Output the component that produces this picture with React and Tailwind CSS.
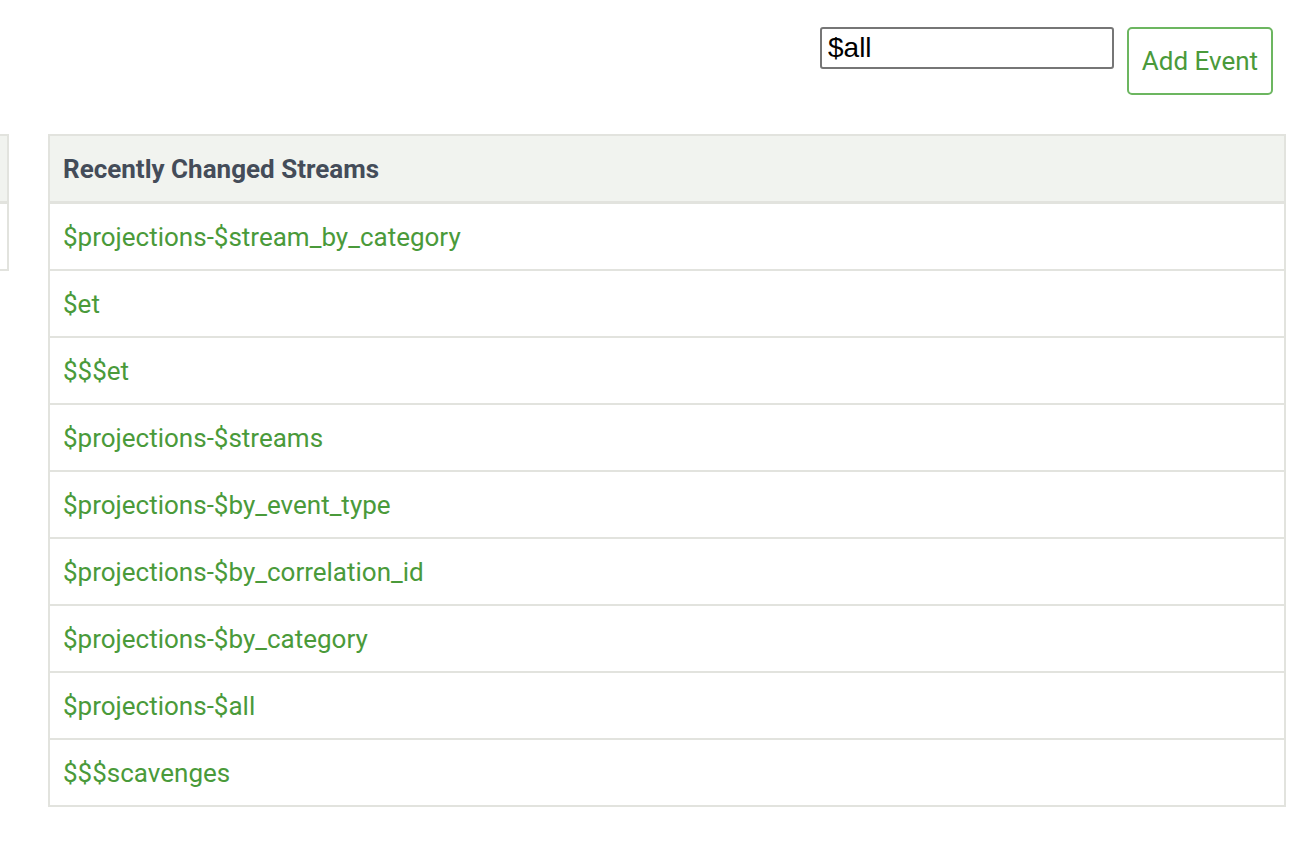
const streams = [
  "$projections-$stream_by_category",
  "$et",
  "$$$et",
  "$projections-$streams",
  "$projections-$by_event_type",
  "$projections-$by_correlation_id",
  "$projections-$by_category",
  "$projections-$all",
  "$$$scavenges",
];

export default function App() {
  return (
    <div className="min-h-[860px] w-[1304px] bg-white font-['Roboto',sans-serif] overflow-hidden">
      <div className="flex justify-end items-start gap-[13px] pt-[27px] pr-[31px]">
        <input
          type="text"
          defaultValue="$all"
          className="w-[294px] h-[42px] border-2 border-[#767676] rounded-[3px] px-[6px] text-[28px] text-black font-['Liberation_Sans',Arial,sans-serif] outline-none"
        />
        <button className="w-[146px] h-[68px] border-2 border-[#6cb660] rounded-[5px] text-[26px] text-[#4a9a3a] bg-white">
          Add Event
        </button>
      </div>

      <div className="flex items-start gap-[39px] mt-[39px]">
        <div className="w-[9px] shrink-0 border-y-2 border-r-2 border-[#e2e3de]">
          <div className="h-[68px] bg-[#f1f3ef] border-b-[3px] border-[#e2e3de]" />
          <div className="h-[65px]" />
        </div>

        <div className="w-[1238px] shrink-0 border-2 border-[#e2e3de]">
          <div className="h-[68px] bg-[#f1f3ef] border-b-[3px] border-[#e2e3de] flex items-center px-[13px] pt-[2px]">
            <span className="text-[26px] font-bold text-[#444c59]">
              Recently Changed Streams
            </span>
          </div>
          {streams.map((s, i) => (
            <div
              key={i}
              className={
                i < streams.length - 1
                  ? "h-[67px] flex items-center px-[13px] pt-[2px] border-b-2 border-[#e2e3de]"
                  : "h-[65px] flex items-center px-[13px] pt-[2px]"
              }
            >
              <a className="text-[26px] text-[#4a9a3a] cursor-pointer">{s}</a>
            </div>
          ))}
        </div>
      </div>
    </div>
  );
}
